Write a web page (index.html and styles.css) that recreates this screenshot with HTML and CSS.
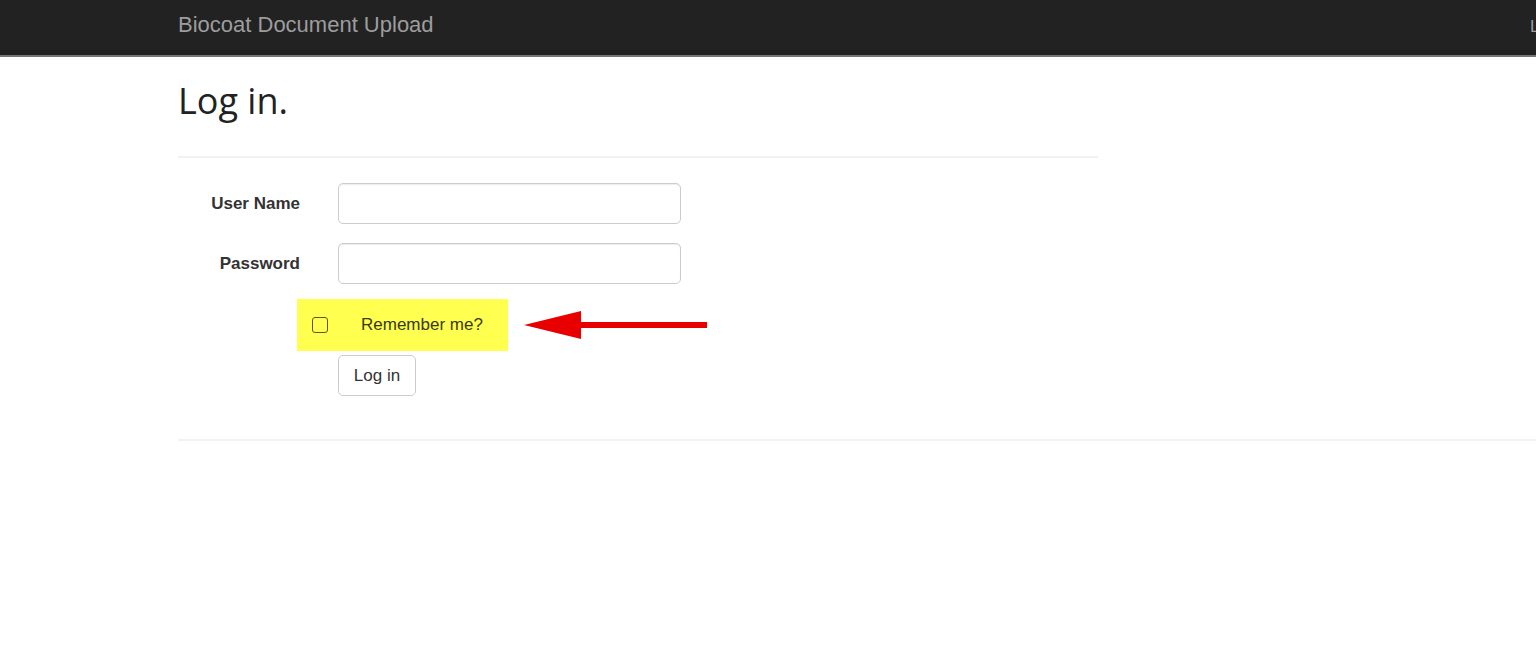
FILE: index.html
```html
<!DOCTYPE html>
<html>
<head>
<meta charset="utf-8">
<title>Log in - Biocoat Document Upload</title>
<link rel="stylesheet" href="styles.css">
</head>
<body>
<header class="navbar">
  <div class="nav-spacer"></div>
  <a class="brand" href="#">Biocoat Document Upload</a>
  <a class="nav-link" href="#">Log in</a>
</header>
<main class="container">
  <h2 class="title">Log in.</h2>
  <hr class="rule rule-short">
  <form class="login-form">
    <div class="form-row">
      <label class="field-label" for="user">User Name</label>
      <input class="field-input" id="user" type="text">
    </div>
    <div class="form-row">
      <label class="field-label" for="pass">Password</label>
      <input class="field-input" id="pass" type="password">
    </div>
    <div class="remember-row">
      <div class="highlight">
        <span class="checkbox"></span>
        <span class="remember-text">Remember me?</span>
      </div>
      <svg class="arrow" width="184" height="28" viewBox="0 0 184 28">
        <polygon points="0,14 57,0 57,28" fill="#e80000"/>
        <rect x="56" y="11" width="127" height="6" fill="#e80000"/>
      </svg>
    </div>
    <div class="button-row">
      <button class="btn" type="button">Log in</button>
    </div>
  </form>
  <hr class="rule rule-long">
</main>
</body>
</html>
```

FILE: styles.css
```css
html, body {
  margin: 0;
  padding: 0;
  background: #ffffff;
  overflow: hidden;
}

body {
  font-family: "Liberation Sans", Arial, sans-serif;
  color: #333333;
  width: 1536px;
  height: 669px;
}

.navbar {
  display: grid;
  grid-template-columns: 178px 1352px 60px;
  height: 57px;
  box-sizing: border-box;
  padding-top: 14px;
  background: #222222;
  border-bottom: 2px solid #757575;
  overflow: hidden;
  white-space: nowrap;
}

.brand {
  font-size: 22px;
  line-height: 22px;
  color: #9d9d9d;
  text-decoration: none;
}

.nav-link {
  font-size: 17px;
  line-height: 22px;
  padding-top: 2px;
  color: #9d9d9d;
  text-decoration: none;
}

.container {
  padding-left: 178px;
}

.title {
  margin: 23px 0 0 0;
  font-family: "Open Sans", "Noto Sans", sans-serif;
  font-weight: 400;
  font-size: 36px;
  line-height: 42px;
  color: #222222;
}

.rule {
  border: 0;
  height: 2px;
  background: #f2f2f2;
  margin: 0;
}

.rule-short {
  width: 920px;
  margin-top: 34px;
}

.rule-long {
  width: 1400px;
  margin-top: 43px;
}

.login-form {
  display: flex;
  flex-direction: column;
  padding-top: 25px;
}

.form-row {
  display: grid;
  grid-template-columns: 122px 343px;
  column-gap: 38px;
  align-items: center;
  margin-bottom: 19px;
}

.field-label {
  text-align: right;
  font-weight: 700;
  font-size: 17px;
  color: #333333;
}

.field-input {
  height: 41px;
  box-sizing: border-box;
  border: 1px solid #cccccc;
  border-radius: 5px;
  box-shadow: inset 0 1px 1px rgba(0, 0, 0, 0.075);
  margin: 0;
  padding: 7px 14px;
  font-size: 17px;
}

.remember-row {
  display: flex;
  align-items: center;
  margin-top: -4px;
  margin-left: 119px;
  gap: 16px;
}

.highlight {
  display: flex;
  align-items: center;
  width: 211px;
  height: 52px;
  box-sizing: border-box;
  padding-left: 15px;
  background: #ffff4f;
}

.checkbox {
  width: 14px;
  height: 14px;
  border: 1.5px solid #5a5a1e;
  border-radius: 3px;
  margin-right: 33px;
}

.remember-text {
  font-size: 17px;
  color: #3a3a12;
}

.arrow {
  display: block;
}

.button-row {
  padding-left: 160px;
  margin-top: 4px;
}

.btn {
  width: 78px;
  height: 41px;
  box-sizing: border-box;
  border: 1px solid #cccccc;
  border-radius: 5px;
  background: #ffffff;
  font-family: "Liberation Sans", Arial, sans-serif;
  font-size: 17px;
  color: #333333;
  padding: 0;
}
```
